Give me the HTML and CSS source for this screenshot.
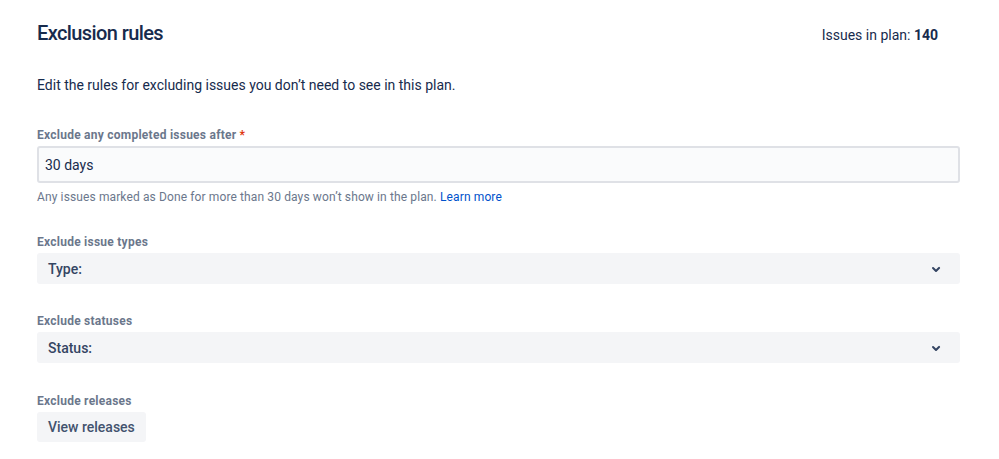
FILE: index.html
```html
<!DOCTYPE html>
<html>
<head>
<meta charset="utf-8">
<link rel="stylesheet" href="styles.css">
</head>
<body>
<div class="page">
  <div class="header">
    <h1 class="title">Exclusion rules</h1>
    <div class="count">Issues in plan: <b>140</b></div>
  </div>
  <p class="desc">Edit the rules for excluding issues you don’t need to see in this plan.</p>

  <div class="field f1">
    <div class="label">Exclude any completed issues after<span class="req">*</span></div>
    <div class="input">30 days</div>
    <div class="help">Any issues marked as Done for more than 30 days won’t show in the plan. <a class="link">Learn more</a></div>
  </div>

  <div class="field f2">
    <div class="label">Exclude issue types</div>
    <div class="select"><span>Type:</span>
      <svg width="24" height="24" viewBox="0 0 24 24"><path d="M8.3 10.3a1 1 0 0 1 1.4 0L12 12.6l2.3-2.3a1 1 0 1 1 1.4 1.4l-3 3a1 1 0 0 1-1.4 0l-3-3a1 1 0 0 1 0-1.4z" fill="#344563"/></svg>
    </div>
  </div>

  <div class="field f2">
    <div class="label">Exclude statuses</div>
    <div class="select"><span>Status:</span>
      <svg width="24" height="24" viewBox="0 0 24 24"><path d="M8.3 10.3a1 1 0 0 1 1.4 0L12 12.6l2.3-2.3a1 1 0 1 1 1.4 1.4l-3 3a1 1 0 0 1-1.4 0l-3-3a1 1 0 0 1 0-1.4z" fill="#344563"/></svg>
    </div>
  </div>

  <div class="field f3">
    <div class="label">Exclude releases</div>
    <div class="btnrow"><button class="btn">View releases</button></div>
  </div>
</div>
</body>
</html>
```
FILE: styles.css
```css
* { box-sizing: border-box; }
body { margin: 0; background: #fff; font-family: Roboto, "Noto Sans", sans-serif; color: #172B4D; }
.page { padding: 19px 39px 0 37px; width: 999px; }
.header { display: flex; justify-content: space-between; align-items: center; padding-right: 22px; height: 28px; }
.title { margin: 0; font-size: 20px; font-weight: 500; line-height: 28px; letter-spacing: -0.6px; }
.count { font-size: 14px; margin-top: 4px; }
.count b { font-weight: 700; }
.desc { margin: 28px 0 0; font-size: 14px; line-height: 20px; }
.field { display: flex; flex-direction: column; }
.f1 { margin-top: 32px; }
.f2 { margin-top: 29px; }
.f3 { margin-top: 30px; }
.label { font-size: 12px; font-weight: 700; color: #6B778C; line-height: 16px; height: 19px; letter-spacing: 0.25px; }
.req { color: #DE350B; margin-left: 3px; }
.input { height: 37px; border: 2px solid #DFE1E6; background: #FAFBFC; border-radius: 3px; font-size: 14px; padding: 0 6px; display: flex; align-items: center; }
.help { font-size: 12px; color: #6B778C; line-height: 16px; margin-top: 6px; letter-spacing: 0.12px; }
.link { color: #0052CC; }
.select { height: 31px; background: #F4F5F7; border-radius: 3px; display: flex; align-items: center; justify-content: space-between; padding: 0 12px 0 11px; font-size: 14px; font-weight: 500; color: #344563; }
.btnrow { display: flex; }
.btn { height: 30px; border: none; background: #F4F5F7; border-radius: 3px; font-family: inherit; font-size: 14px; font-weight: 500; color: #42526E; padding: 0 11px; }
```
